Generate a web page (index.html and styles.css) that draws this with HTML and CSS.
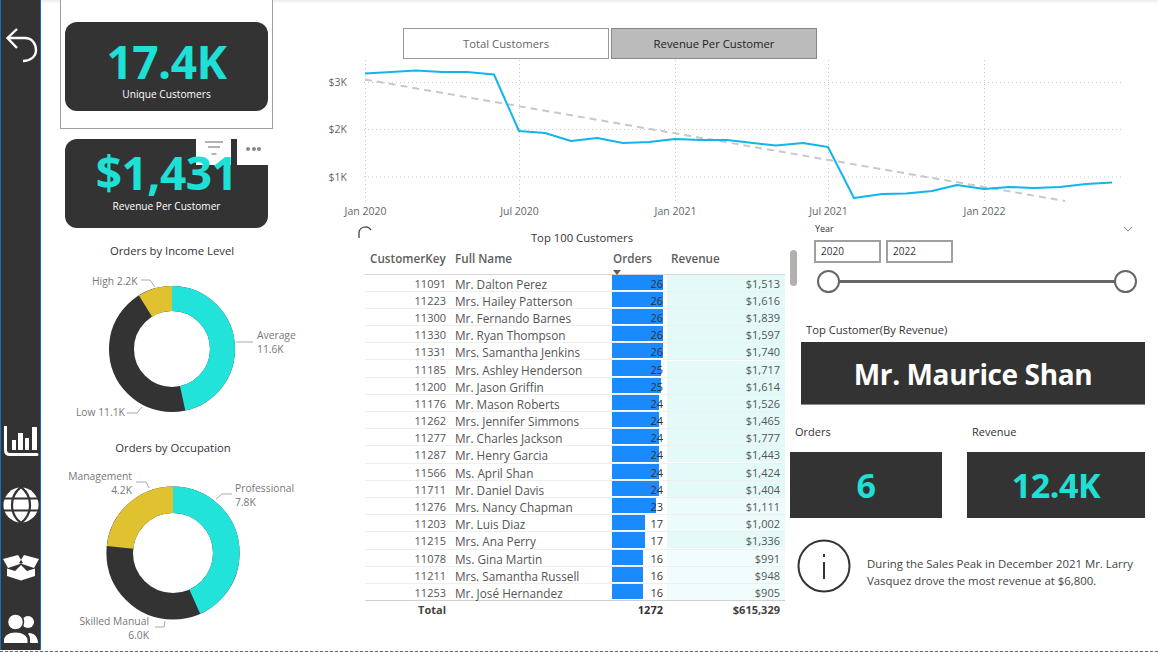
FILE: index.html
```html
<!DOCTYPE html>
<html lang="en">
<head>
<meta charset="utf-8">
<title>Customer Detail</title>
<link rel="stylesheet" href="styles.css">
</head>
<body>
<div class="page">
  <nav class="sidebar">
    <svg class="ico-back" viewBox="0 0 33 36" width="33" height="36"><path d="M12 2L2.500 11L12 21M2.500 11H20C27 11 31 17 31 23C31 30 25 34 18 34" fill="none" stroke="#fff" stroke-width="2.400"/></svg>
    <div class="side-icons">
      <svg viewBox="0 0 36 34" width="36" height="34"><path d="M2.500 1V24Q2.500 28.500 7 28.500H34" fill="none" stroke="#fff" stroke-width="3" stroke-linecap="round"/><path d="M9 14h4v10H9zM15 7h5v17h-5zM22 12h4v12h-4zM29 1h5v23h-5z" fill="#fff"/></svg>
      <svg viewBox="0 0 36 36" width="36" height="36"><circle cx="18" cy="18" r="17.500" fill="#fff"/><path d="M0 11.500H36M0 23.500H36" stroke="#333" stroke-width="2.200"/><path d="M18 0C6 9 6 27 18 36C30 27 30 9 18 0" fill="none" stroke="#333" stroke-width="2.200"/></svg>
      <svg viewBox="0 0 36 26" width="36" height="26"><path d="M0 4L15 0L20 8L5 13Z M36 4L21 0L16 8L31 13Z" fill="#fff"/><path d="M4 13.500L12 16L18 10L24 16L32 13.500V21L18 25.500L4 21Z" fill="#fff"/></svg>
      <svg viewBox="0 0 36 32" width="36" height="32"><circle cx="25" cy="8" r="6" fill="#fff"/><circle cx="12.500" cy="8" r="8" fill="#fff" stroke="#333" stroke-width="1.500"/><path d="M26 19C31 19 35 23 35 29H27V26C27 24 27 22 25 20Z" fill="#fff"/><path d="M1 29V26C1 22 6 18.500 12.500 18.500C19 18.500 24.500 22 24.500 26V29Z" fill="#fff"/></svg>
    </div>
  </nav>

  <aside class="left">
    <div class="kpi-frame">
      <div class="kpi">
        <div class="kpi-value">17.4K</div>
        <div class="kpi-label">Unique Customers</div>
      </div>
    </div>
    <div class="kpi kpi-second">
      <div class="visual-tools">
        <span class="tool tool-filter"><svg viewBox="0 0 18 14" width="18" height="14"><path d="M0 1H18M3 6H15M6.500 13H11.500" stroke="#666" stroke-width="1"/></svg></span>
        <span class="tool tool-more"><i></i><i></i><i></i></span>
      </div>
      <div class="kpi-value kpi-value-b">$1,431</div>
      <div class="kpi-label">Revenue Per Customer</div>
    </div>
    <svg class="donut donut-a" viewBox="0 0 279 195" width="279" height="195">
      <text class="chart-title" x="131" y="21" text-anchor="middle">Orders by Income Level</text>
      <circle class="seg" cx="131" cy="115" r="50.500" stroke="#333333" stroke-width="25"/>
      <circle class="seg" cx="131" cy="115" r="50.500" stroke="#21e3da" stroke-width="25" pathLength="100" stroke-dasharray="46.600 53.400" transform="rotate(-90 131 115)"/>
      <circle class="seg" cx="131" cy="115" r="50.500" stroke="#e0c130" stroke-width="25" pathLength="100" stroke-dasharray="8.800 91.200" stroke-dashoffset="8.800" transform="rotate(-90 131 115)"/>
      <path class="leader" d="M195 108H212"/>
      <text class="lbl" x="216" y="105">Average</text><text class="lbl" x="216" y="119">11.6K</text>
      <path class="leader" d="M100 46H109L114 53"/>
      <text class="lbl" x="51" y="51">High 2.2K</text>
      <path class="leader" d="M86 179H96L101 173"/>
      <text class="lbl" x="35" y="182">Low 11.1K</text>
    </svg>
    <svg class="donut donut-b" viewBox="0 0 279 212" width="279" height="212">
      <text class="chart-title" x="132" y="17" text-anchor="middle">Orders by Occupation</text>
      <circle class="seg" cx="132" cy="118" r="53.300" stroke="#333333" stroke-width="26.600"/>
      <circle class="seg" cx="132" cy="118" r="53.300" stroke="#21e3da" stroke-width="26.600" pathLength="100" stroke-dasharray="43.300 56.700" transform="rotate(-90 132 118)"/>
      <circle class="seg" cx="132" cy="118" r="53.300" stroke="#e0c130" stroke-width="26.600" pathLength="100" stroke-dasharray="23.300 76.700" stroke-dashoffset="23.300" transform="rotate(-90 132 118)"/>
      <path class="leader" d="M175 64L181 59H191"/>
      <text class="lbl" x="194" y="57">Professional</text><text class="lbl" x="194" y="71">7.8K</text>
      <path class="leader" d="M95 47H105L108 53"/>
      <text class="lbl" x="91" y="45" text-anchor="end">Management</text><text class="lbl" x="91" y="59" text-anchor="end">4.2K</text>
      <path class="leader" d="M114 192H123L124 186"/>
      <text class="lbl" x="108" y="190" text-anchor="end">Skilled Manual</text><text class="lbl" x="108" y="204" text-anchor="end">6.0K</text>
    </svg>
  </aside>

  <main class="main">
    <section class="trend">
      <div class="toggle">
        <button class="toggle-btn" type="button">Total Customers</button>
        <button class="toggle-btn is-on" type="button">Revenue Per Customer</button>
      </div>
      <svg class="line-chart" viewBox="320 60 838 164" width="838" height="164">
        <path class="grid" d="M364 82.500H1122M364 129.500H1122M364 177H1122M365.500 60V202M519.500 60V202M675.500 60V202M828.500 60V202M984.500 60V202"/>
        <path class="trendline" d="M365 79.500L1065 201"/>
        <path class="series" d="M365 73.500L391 72L416 70.500L442 72L467 72L494 74.500L519 131L545 133L571 141L597 138L623 143L649 142L675 139L701 140L727 140L753 143L776 145.500L803 143L828 147L854 198L882 194L906 193.500L932 191L957 185L984 189L1009 187L1034 188L1060 187L1086 184L1112 182.500"/>
        <text class="axis" x="347" y="86" text-anchor="end">$3K</text>
        <text class="axis" x="347" y="133" text-anchor="end">$2K</text>
        <text class="axis" x="347" y="181" text-anchor="end">$1K</text>
        <text class="axis" x="365.500" y="215" text-anchor="middle">Jan 2020</text>
        <text class="axis" x="519.500" y="215" text-anchor="middle">Jul 2020</text>
        <text class="axis" x="675.500" y="215" text-anchor="middle">Jan 2021</text>
        <text class="axis" x="828.500" y="215" text-anchor="middle">Jul 2021</text>
        <text class="axis" x="984.500" y="215" text-anchor="middle">Jan 2022</text>
      </svg>
    </section>

    <section class="lower">
      <div class="table-visual">
        <svg class="spinner" viewBox="0 0 14 14" width="14" height="14"><path d="M1 12V8A6.500 6.500 0 0 1 13 4" fill="none" stroke="#444" stroke-width="1.300"/></svg>
        <div class="table-title">Top 100 Customers</div>
        <div class="scrollbar"></div>
        <table class="grid-table">
          <thead>
            <tr><th class="c-key">CustomerKey</th><th class="c-name">Full Name</th><th class="c-ord">Orders<span class="sort"></span></th><th class="c-rev">Revenue</th></tr>
          </thead>
          <tbody>
            <tr><td class="c-key">11091</td><td class="c-name">Mr. Dalton Perez</td><td class="c-ord"><span class="bar" style="width:51px"></span><span class="num">26</span></td><td class="c-rev"><div class="rev r1">$1,513</div></td></tr>
            <tr><td class="c-key">11223</td><td class="c-name">Mrs. Hailey Patterson</td><td class="c-ord"><span class="bar" style="width:51px"></span><span class="num">26</span></td><td class="c-rev"><div class="rev r1">$1,616</div></td></tr>
            <tr><td class="c-key">11300</td><td class="c-name">Mr. Fernando Barnes</td><td class="c-ord"><span class="bar" style="width:51px"></span><span class="num">26</span></td><td class="c-rev"><div class="rev r1">$1,839</div></td></tr>
            <tr><td class="c-key">11330</td><td class="c-name">Mr. Ryan Thompson</td><td class="c-ord"><span class="bar" style="width:51px"></span><span class="num">26</span></td><td class="c-rev"><div class="rev r1">$1,597</div></td></tr>
            <tr><td class="c-key">11331</td><td class="c-name">Mrs. Samantha Jenkins</td><td class="c-ord"><span class="bar" style="width:51px"></span><span class="num">26</span></td><td class="c-rev"><div class="rev r1">$1,740</div></td></tr>
            <tr><td class="c-key">11185</td><td class="c-name">Mrs. Ashley Henderson</td><td class="c-ord"><span class="bar" style="width:49px"></span><span class="num">25</span></td><td class="c-rev"><div class="rev r1">$1,717</div></td></tr>
            <tr><td class="c-key">11200</td><td class="c-name">Mr. Jason Griffin</td><td class="c-ord"><span class="bar" style="width:49px"></span><span class="num">25</span></td><td class="c-rev"><div class="rev r1">$1,614</div></td></tr>
            <tr><td class="c-key">11176</td><td class="c-name">Mr. Mason Roberts</td><td class="c-ord"><span class="bar" style="width:47px"></span><span class="num">24</span></td><td class="c-rev"><div class="rev r1">$1,526</div></td></tr>
            <tr><td class="c-key">11262</td><td class="c-name">Mrs. Jennifer Simmons</td><td class="c-ord"><span class="bar" style="width:47px"></span><span class="num">24</span></td><td class="c-rev"><div class="rev r1">$1,465</div></td></tr>
            <tr><td class="c-key">11277</td><td class="c-name">Mr. Charles Jackson</td><td class="c-ord"><span class="bar" style="width:47px"></span><span class="num">24</span></td><td class="c-rev"><div class="rev r1">$1,777</div></td></tr>
            <tr><td class="c-key">11287</td><td class="c-name">Mr. Henry Garcia</td><td class="c-ord"><span class="bar" style="width:47px"></span><span class="num">24</span></td><td class="c-rev"><div class="rev r1">$1,443</div></td></tr>
            <tr><td class="c-key">11566</td><td class="c-name">Ms. April Shan</td><td class="c-ord"><span class="bar" style="width:47px"></span><span class="num">24</span></td><td class="c-rev"><div class="rev r1">$1,424</div></td></tr>
            <tr><td class="c-key">11711</td><td class="c-name">Mr. Daniel Davis</td><td class="c-ord"><span class="bar" style="width:47px"></span><span class="num">24</span></td><td class="c-rev"><div class="rev r1">$1,404</div></td></tr>
            <tr><td class="c-key">11276</td><td class="c-name">Mrs. Nancy Chapman</td><td class="c-ord"><span class="bar" style="width:44px"></span><span class="num">23</span></td><td class="c-rev"><div class="rev r2">$1,111</div></td></tr>
            <tr><td class="c-key">11203</td><td class="c-name">Mr. Luis Diaz</td><td class="c-ord"><span class="bar" style="width:33px"></span><span class="num">17</span></td><td class="c-rev"><div class="rev r2">$1,002</div></td></tr>
            <tr><td class="c-key">11215</td><td class="c-name">Mrs. Ana Perry</td><td class="c-ord"><span class="bar" style="width:33px"></span><span class="num">17</span></td><td class="c-rev"><div class="rev r1">$1,336</div></td></tr>
            <tr><td class="c-key">11078</td><td class="c-name">Ms. Gina Martin</td><td class="c-ord"><span class="bar" style="width:31px"></span><span class="num">16</span></td><td class="c-rev"><div class="rev r3">$991</div></td></tr>
            <tr><td class="c-key">11211</td><td class="c-name">Mrs. Samantha Russell</td><td class="c-ord"><span class="bar" style="width:31px"></span><span class="num">16</span></td><td class="c-rev"><div class="rev r3">$948</div></td></tr>
            <tr><td class="c-key">11253</td><td class="c-name">Mr. José Hernandez</td><td class="c-ord"><span class="bar" style="width:31px"></span><span class="num">16</span></td><td class="c-rev"><div class="rev r3">$905</div></td></tr>
          </tbody>
          <tfoot>
            <tr><td class="c-key">Total</td><td class="c-name"></td><td class="c-ord"><span class="num">1272</span></td><td class="c-rev"><div class="rev">$615,329</div></td></tr>
          </tfoot>
        </table>
      </div>

      <div class="side">
        <div class="slicer">
          <div class="slicer-head"><span>Year</span><svg viewBox="0 0 10 6" width="10" height="6"><path d="M1 1L5 5L9 1" fill="none" stroke="#888" stroke-width="1"/></svg></div>
          <div class="slicer-inputs"><span class="year-box">2020</span><span class="year-box">2022</span></div>
          <div class="slider"><span class="knob"></span><span class="knob"></span></div>
        </div>
        <div class="top-label">Top Customer(By Revenue)</div>
        <div class="top-name">Mr. Maurice Shan</div>
        <div class="pair">
          <div class="stat stat-orders"><div class="stat-label">Orders</div><div class="stat-box">6</div></div>
          <div class="stat stat-revenue"><div class="stat-label">Revenue</div><div class="stat-box">12.4K</div></div>
        </div>
        <div class="note">
          <svg viewBox="0 0 54 54" width="54" height="54"><circle cx="27" cy="27" r="25.500" fill="none" stroke="#333" stroke-width="2"/><rect x="26" y="23" width="2" height="17" fill="#333"/><rect x="26" y="15" width="2" height="3" fill="#333"/></svg>
          <p>During the Sales Peak in December 2021 Mr. Larry Vasquez drove the most revenue at $6,800.</p>
        </div>
      </div>
    </section>
  </main>
</div>
</body>
</html>
```

FILE: styles.css
```css
* { box-sizing: border-box; }
html, body { margin: 0; padding: 0; height: 100%; overflow: hidden; background: #fff; }
body { font-family: "Open Sans", "Liberation Sans", sans-serif; color: #333; }

.page {
  display: flex;
  width: 1158px;
  height: 652px;
  overflow: hidden;
  position: relative;
  border-bottom: 1px dashed #666;
  background: linear-gradient(#ececec, #fff 4px);
}

/* sidebar */
.sidebar {
  flex: none;
  width: 41px;
  height: 650px;
  background: #333;
  border-left: 1px solid #1a6fb5;
  border-right: 1px solid #1a6fb5;
  display: flex;
  flex-direction: column;
  align-items: center;
}
.ico-back { margin-top: 27px; margin-left: 1px; flex: none; }
.side-icons { margin-top: 363px; display: flex; flex-direction: column; align-items: center; }
.side-icons svg { display: block; flex: none; }
.side-icons svg:nth-child(2) { margin-top: 27px; }
.side-icons svg:nth-child(3) { margin-top: 32px; }
.side-icons svg:nth-child(4) { margin-top: 33px; }

/* left column */
.left { flex: none; width: 279px; display: flex; flex-direction: column; }
.kpi-frame {
  width: 213px;
  height: 130px;
  margin: -1px 0 0 19px;
  padding: 22px 4px 0 4px;
  border: 1px solid #a0a0a0;
  background: #fff;
}
.kpi {
  position: relative;
  width: 203px;
  height: 89px;
  background: #333;
  border-radius: 12px;
  text-align: center;
  color: #fff;
}
.kpi-second { margin: 10px 0 0 24px; }
.kpi-value {
  font-size: 46px;
  line-height: 54px;
  padding-top: 12px;
  height: 63px;
  font-weight: 700;
  color: #1fe0d6;
  letter-spacing: -0.5px;
}
.kpi-value-b { position: relative; padding-top: 6px; height: 56px; }
.kpi-label { font-size: 10.200px; line-height: 14px; color: #fff; padding-top: 2px; }
.kpi-second .kpi-label { padding-top: 4px; font-size: 10.100px; }
.visual-tools { position: absolute; top: 0; right: 0; display: flex; gap: 6px; }
.tool { display: flex; background: #fff; height: 26px; }
.tool-filter { width: 35px; justify-content: center; padding-top: 2px; }
.tool-more { width: 31px; align-items: center; justify-content: center; gap: 1.500px; padding: 0 0 6px 2px; }
.tool-more i { width: 4px; height: 4px; border-radius: 50%; background: #888; }

.donut { display: block; flex: none; }
.donut-a { margin-top: 6px; }
.donut-b { margin-top: 6px; }
.chart-title { font-size: 11.300px; fill: #333; }
.lbl { font-size: 10.300px; fill: #777; }
.seg { fill: none; }
.leader { fill: none; stroke: #aaa; stroke-width: 1; }

/* main */
.main { flex: none; width: 838px; display: flex; flex-direction: column; }
.trend { height: 222px; display: flex; flex-direction: column; }
.toggle { display: flex; gap: 2px; margin: 28px 0 0 83px; height: 32px; flex: none; }
.toggle-btn {
  width: 206px;
  height: 31px;
  padding: 0;
  border: 1px solid #999;
  background: #fff;
  font: 11.300px "Open Sans", "Liberation Sans", sans-serif;
  color: #666;
}
.toggle-btn.is-on { background: #bbb; border-color: #888; color: #222; }
.line-chart { display: block; flex: none; }
.grid { fill: none; stroke: #c9c9c9; stroke-width: 1; stroke-dasharray: 1 3; }
.trendline { fill: none; stroke: #c8c8c8; stroke-width: 2; stroke-dasharray: 7 5; }
.series { fill: none; stroke: #12b5ea; stroke-width: 2; stroke-linejoin: round; }
.axis { font-size: 10.500px; fill: #666; }

.lower { display: flex; height: 430px; }
.table-visual { position: relative; flex: none; width: 481px; padding-left: 45px; }
.spinner { position: absolute; left: 38px; top: 4px; }
.table-title { width: 420px; text-align: center; font-size: 11.300px; line-height: 15px; color: #333; padding: 8px 0 0 14px; height: 25px; }
.scrollbar { position: absolute; left: 470px; top: 28px; width: 7px; height: 36px; border-radius: 4px; background: #b3b1af; }

.grid-table { width: 420px; border-collapse: collapse; table-layout: fixed; font-size: 11px; }
.grid-table th { height: 27px; font-weight: 600; font-size: 11.700px; color: #605e5c; text-align: left; border-bottom: 1px solid #d6d6d6; padding: 0 0 5px; vertical-align: middle; }
.grid-table td { height: 17.200px; padding: 2px 0 0; color: #555; border-bottom: 1px solid #efefef; line-height: 14px; white-space: nowrap; }
.grid-table tbody tr:last-child td { border-bottom: 1px solid #d0d0d0; }
.grid-table td.c-rev { padding-top: 0; }
.grid-table tfoot td { height: 18px; padding-top: 0; border-bottom: 0; font-weight: 700; color: #444; line-height: 15px; }
.c-key { width: 81px; text-align: right; }
th.c-key { text-align: left; padding-left: 5px !important; }
.c-name { width: 166px; padding-left: 9px !important; }
td.c-name { font-size: 11.800px; }
.c-ord { width: 55px; position: relative; text-align: right; }
th.c-ord { position: relative; padding-left: 1px !important; }
.c-rev { width: 118px; }
th.c-rev { padding-left: 4px !important; }
.bar { position: absolute; left: 0; top: 0; bottom: 1px; background: #1a8bff; }
.grid-table .num { position: relative; display: block; padding-right: 4px; color: #333; }
.sort { position: absolute; left: 1px; bottom: -1px; border: 4px solid transparent; border-top: 5px solid #605e5c; border-bottom: 0; }
.rev { height: 16px; line-height: 17px; text-align: right; padding-right: 5px; }
.grid-table tfoot .rev { line-height: 15px; }
.r1 { background: #e4faf9; }
.r2 { background: #ecfcfb; }
.r3 { background: #f0fdfc; }

/* right */
.side { flex: none; width: 357px; display: flex; flex-direction: column; }
.slicer { margin-left: 13px; width: 332px; height: 76px; padding-top: 1px; }
.slicer-head { display: flex; justify-content: space-between; align-items: center; font-size: 9px; line-height: 12px; padding: 0 13px 0 1px; color: #333; }
.slicer-inputs { display: flex; gap: 5px; margin-top: 5px; }
.year-box { width: 67px; height: 23px; border: 2px solid #a0a0a0; font-size: 10px; line-height: 19px; padding-left: 5px; color: #333; }
.slider { position: relative; display: flex; justify-content: space-between; align-items: center; margin: 7px 0 0 3px; width: 320px; height: 23px; }
.slider::before { content: ""; position: absolute; left: 4px; right: 4px; top: 10px; height: 3px; background: #666; }
.knob { position: relative; width: 23px; height: 23px; border: 2px solid #666; border-radius: 50%; background: #fff; }

.top-label { margin: 24px 0 0 5px; font-size: 11.200px; line-height: 15px; color: #333; }
.top-name {
  margin-top: 5px;
  width: 344px;
  height: 63px;
  background: #333;
  border-bottom: 1px solid #888;
  color: #fff;
  font-size: 28px;
  font-weight: 700;
  line-height: 64px;
  text-align: center;
  letter-spacing: -0.4px;
}
.pair { display: flex; gap: 25px; margin: 19px 0 0 -11px; }
.stat-orders { width: 152px; }
.stat-revenue { width: 178px; }
.stat-label { font-size: 11px; line-height: 15px; padding-left: 5px; color: #333; height: 28px; }
.stat-box { height: 66px; background: #333; color: #1fe0d6; font-size: 34px; font-weight: 700; line-height: 66px; text-align: center; letter-spacing: -0.4px; }
.note { display: flex; align-items: center; gap: 16px; margin: 21px 0 0 -4px; }
.note svg { flex: none; }
.note p { margin: 12px 0 0; width: 278px; font-size: 11.400px; line-height: 17px; color: #444; }
```
